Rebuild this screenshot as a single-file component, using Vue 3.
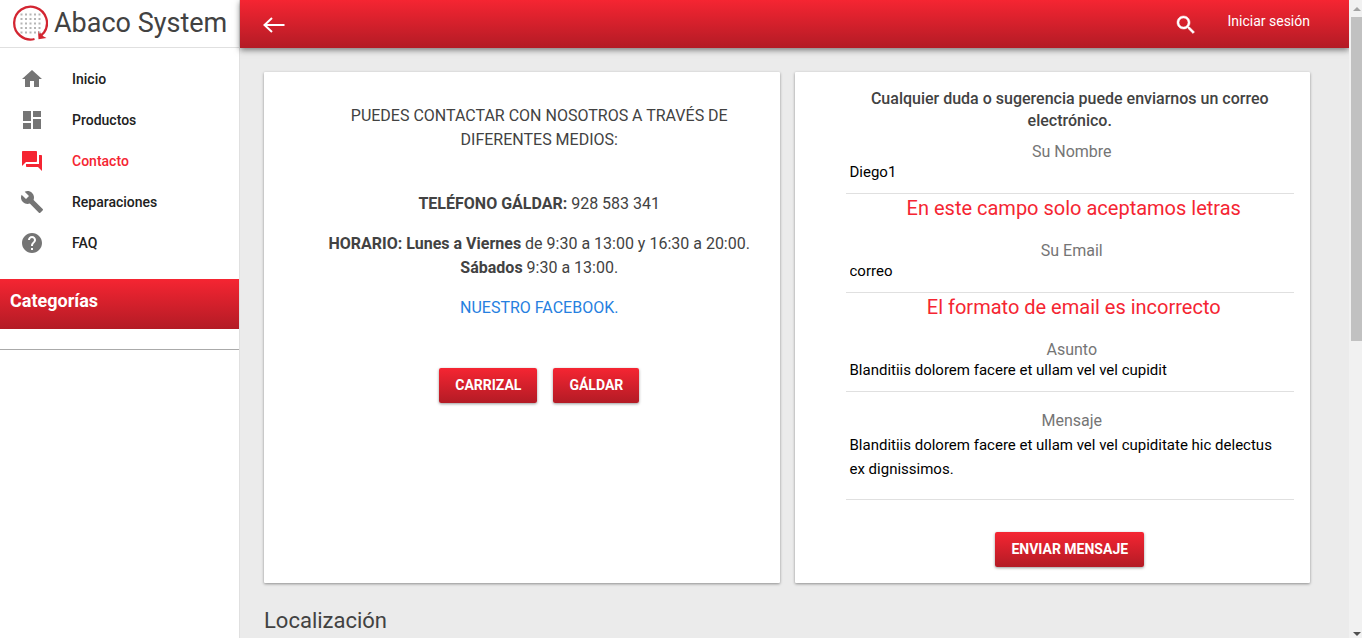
<script setup>
import { ref } from 'vue'

const links = [
  { text: 'Inicio', path: 'M10 20v-6h4v6h5v-8h3L12 3 2 12h3v8z' },
  { text: 'Productos', path: 'M3 13h8V3H3v10zm0 8h8v-6H3v6zm10 0h8V11h-8v10zm0-18v6h8V3h-8z' },
  { text: 'Contacto', active: true, path: 'M21 6h-2v9H6v2c0 .55.45 1 1 1h11l4 4V7c0-.55-.45-1-1-1zm-4 6V3c0-.55-.45-1-1-1H3c-.55 0-1 .45-1 1v14l4-4h10c.55 0 1-.45 1-1z' },
  { text: 'Reparaciones', path: 'M22.7 19l-9.1-9.1c.9-2.3.4-5-1.5-6.9-2-2-5-2.4-7.4-1.3L9 6 6 9 1.6 4.7C.4 7.1.9 10.1 2.9 12.1c1.9 1.9 4.6 2.4 6.9 1.5l9.1 9.1c.4.4 1 .4 1.4 0l2.3-2.3c.5-.4.5-1.1.1-1.4z' },
  { text: 'FAQ', path: 'M12 2C6.48 2 2 6.48 2 12s4.48 10 10 10 10-4.48 10-10S17.52 2 12 2zm1 17h-2v-2h2v2zm2.07-7.75l-.9.92C13.45 12.9 13 13.5 13 15h-2v-.5c0-1.1.45-2.1 1.17-2.83l1.24-1.26c.37-.36.59-.86.59-1.41 0-1.1-.9-2-2-2s-2 .9-2 2H8c0-2.21 1.79-4 4-4s4 1.79 4 4c0 .88-.36 1.68-.93 2.25z' }
]

const fields = ref([
  { id: 'nombre', label: 'Su Nombre', value: 'Diego1', error: 'En este campo solo aceptamos letras' },
  { id: 'email', label: 'Su Email', value: 'correo', error: 'El formato de email es incorrecto' },
  { id: 'asunto', label: 'Asunto', value: 'Blanditiis dolorem facere et ullam vel vel cupidit' }
])
const message = ref('Blanditiis dolorem facere et ullam vel vel cupiditate hic delectus ex dignissimos.')

const dotSteps = [9.5, 14, 18.5, 23, 27.5]
</script>

<template>
  <div class="app">
    <aside class="sidebar">
      <a class="brand" href="#">
        <svg class="logo" viewBox="0 0 36 36" aria-hidden="true">
          <path d="M22.5 34A16.4 16.4 0 1 1 32 27.5L29.500 30" fill="none" stroke="#d32531" stroke-width="2.3" />
          <path d="M26 26l.5 8.200 8-1.200-3.200-1.800-2.500-3z" fill="#d32531" />
          <g fill="#b5b5b5">
            <template v-for="y in dotSteps" :key="y">
              <rect v-for="x in dotSteps" :key="x" :x="x - 1" :y="y - 1" width="2" height="2" />
            </template>
          </g>
        </svg>
        <span>Abaco System</span>
      </a>
      <nav class="nav">
        <a v-for="l in links" :key="l.text" href="#" class="nav-link" :class="{ active: l.active }">
          <svg viewBox="0 0 24 24" aria-hidden="true"><path :d="l.path" /></svg>
          <span>{{ l.text }}</span>
        </a>
      </nav>
      <h2 class="categories">Categorías</h2>
      <hr class="divider" />
    </aside>

    <div class="page">
      <header class="topbar">
        <button class="icon-button" type="button" aria-label="Volver">
          <svg viewBox="0 0 24 24"><path d="M22.5 12H2.5M10 5L2.5 12l7.5 7" /></svg>
        </button>
        <div class="actions">
          <button class="icon-button search" type="button" aria-label="Buscar">
            <svg viewBox="0 0 24 24"><path d="M15.5 14h-.79l-.28-.27C15.41 12.59 16 11.11 16 9.5 16 5.91 13.09 3 9.5 3S3 5.91 3 9.5 5.91 16 9.5 16c1.61 0 3.09-.59 4.23-1.57l.27.28v.79l5 4.99L20.49 19l-4.99-5zm-6 0C7.01 14 5 11.99 5 9.5S7.01 5 9.5 5 14 7.01 14 9.5 11.99 14 9.5 14z" /></svg>
          </button>
          <a class="login" href="#">Iniciar sesión</a>
        </div>
      </header>

      <main class="content">
        <div class="cards">
          <section class="card info">
            <p class="intro">PUEDES CONTACTAR CON NOSOTROS A TRAVÉS DE DIFERENTES MEDIOS:</p>
            <p><b>TELÉFONO GÁLDAR:</b> 928 583 341</p>
            <p><b>HORARIO: Lunes a Viernes</b> de 9:30 a 13:00 y 16:30 a 20:00.<br /><b>Sábados</b> 9:30 a 13:00.</p>
            <p><a class="facebook" href="#">NUESTRO FACEBOOK.</a></p>
            <div class="places">
              <button class="button" type="button">CARRIZAL</button>
              <button class="button" type="button">GÁLDAR</button>
            </div>
          </section>

          <form class="card" @submit.prevent>
            <h3 class="form-title">Cualquier duda o sugerencia puede enviarnos un correo electrónico.</h3>
            <div v-for="f in fields" :key="f.id" class="field">
              <label :for="f.id">{{ f.label }}</label>
              <input :id="f.id" v-model="f.value" type="text" />
              <p v-if="f.error" class="error">{{ f.error }}</p>
            </div>
            <div class="field">
              <label for="mensaje">Mensaje</label>
              <textarea id="mensaje" v-model="message"></textarea>
            </div>
            <button class="button send" type="submit">ENVIAR MENSAJE</button>
          </form>
        </div>
        <h2 class="location">Localización</h2>
      </main>
    </div>

    <div class="scrollbar" aria-hidden="true">
      <svg class="arrow up" viewBox="0 0 8 4"><path d="M4 0l4 4H0z" /></svg>
      <div class="thumb"></div>
      <svg class="arrow down" viewBox="0 0 8 4"><path d="M0 0h8L4 4z" /></svg>
    </div>
  </div>
</template>

<style>
body {
  background: #ebebeb;
}
</style>

<style scoped>
* {
  box-sizing: border-box;
}
.app {
  --red-fade: linear-gradient(#f52532, #b31b25);
  display: flex;
  height: 100vh;
  overflow: hidden;
  font: 16px/24px Roboto, sans-serif;
  color: #424242;
}
a {
  color: inherit;
  text-decoration: none;
}
p,
h2,
h3 {
  margin: 0;
}
.sidebar {
  flex: 0 0 240px;
  background: #fff;
  border-right: 1px solid #e0e0e0;
}
.brand {
  display: flex;
  align-items: center;
  gap: 6px;
  height: 48px;
  padding: 0 0 2px 12px;
  border-bottom: 1px solid #e0e0e0;
  font-size: 27px;
}
.logo {
  width: 36px;
  height: 36px;
}
.nav {
  padding: 10px 0 16px;
}
.nav-link {
  display: flex;
  align-items: center;
  gap: 28px;
  height: 41px;
  padding-left: 20px;
  font-size: 14px;
  font-weight: 500;
  color: #212121;
}
.nav-link svg {
  width: 24px;
  height: 24px;
  fill: #757575;
}
.nav-link.active {
  color: #f52532;
}
.nav-link.active svg {
  fill: #f52532;
}
.categories {
  height: 50px;
  padding: 10px;
  background: var(--red-fade);
  color: #fff;
  font-size: 18px;
  line-height: 24px;
}
.divider {
  margin: 20px 0 0;
  border: 0;
  border-top: 1px solid #aaa;
}
.page {
  flex: 1;
  min-width: 0;
  background: #ebebeb;
}
.topbar {
  display: flex;
  align-items: center;
  justify-content: space-between;
  height: 48px;
  padding: 2px 39px 0 22px;
  background: var(--red-fade);
  box-shadow: 0 2px 6px rgba(0, 0, 0, 0.5);
  color: #fff;
}
.icon-button {
  display: flex;
  padding: 0;
  border: 0;
  background: none;
}
.icon-button svg {
  width: 24px;
  height: 24px;
  fill: none;
  stroke: #fff;
  stroke-width: 2;
}
.search svg {
  fill: #fff;
  stroke: #fff;
  stroke-width: 0.5;
}
.actions {
  display: flex;
  gap: 29px;
}
.login {
  font-size: 14px;
  line-height: 16px;
}
.content {
  padding: 24px 39px 0 24px;
}
.cards {
  display: grid;
  grid-template-columns: 1fr 1fr;
  gap: 15px;
}
.card {
  padding: 16px 16px 16px 51px;
  background: #fff;
  border-radius: 1px;
  box-shadow: 0 1px 3px rgba(0, 0, 0, 0.4);
  text-align: center;
}
.info {
  padding-top: 32px;
}
.info p {
  margin-bottom: 16px;
}
.info .intro {
  margin-bottom: 40px;
}
.facebook {
  color: #2680e0;
}
.places {
  display: flex;
  justify-content: center;
  gap: 16px;
  padding-top: 32px;
}
.button {
  height: 35px;
  padding: 0 16px;
  border: 0;
  border-radius: 2px;
  background: var(--red-fade);
  box-shadow: 0 1px 3px rgba(0, 0, 0, 0.4);
  color: #fff;
  font: 700 14px/35px Roboto, sans-serif;
}
.form-title {
  margin-bottom: 8px;
  font-size: 16px;
  font-weight: 500;
  line-height: 22px;
}
.field {
  display: flex;
  flex-direction: column;
  padding-bottom: 17px;
}
label {
  padding-left: 4px;
  color: #757575;
}
input,
textarea {
  width: 100%;
  padding: 0 4px;
  border: 0;
  border-bottom: 1px solid #e0e0e0;
  border-radius: 0;
  outline: 0;
  background: none;
  color: #000;
  font: 15px/24px Roboto, sans-serif;
}
input {
  height: 30px;
  padding-bottom: 13px;
}
textarea {
  height: 67px;
  overflow: hidden;
  resize: none;
}
.error {
  padding-left: 8px;
  color: #f52532;
  font-size: 20px;
  line-height: 28px;
}
.send {
  margin-top: 15px;
}
.location {
  margin-top: 26px;
  font-size: 22px;
  font-weight: 400;
}
.scrollbar {
  display: flex;
  flex: 0 0 13px;
  flex-direction: column;
  align-items: center;
  padding: 7px 0 2px 2px;
  background: #f1f1f1;
}
.arrow {
  width: 8px;
  height: 4px;
}
.up {
  margin-bottom: 6px;
  fill: #a3a3a3;
}
.down {
  margin-top: auto;
  fill: #505050;
}
.thumb {
  width: 100%;
  height: 51.5%;
  background: #c1c1c1;
}
</style>
